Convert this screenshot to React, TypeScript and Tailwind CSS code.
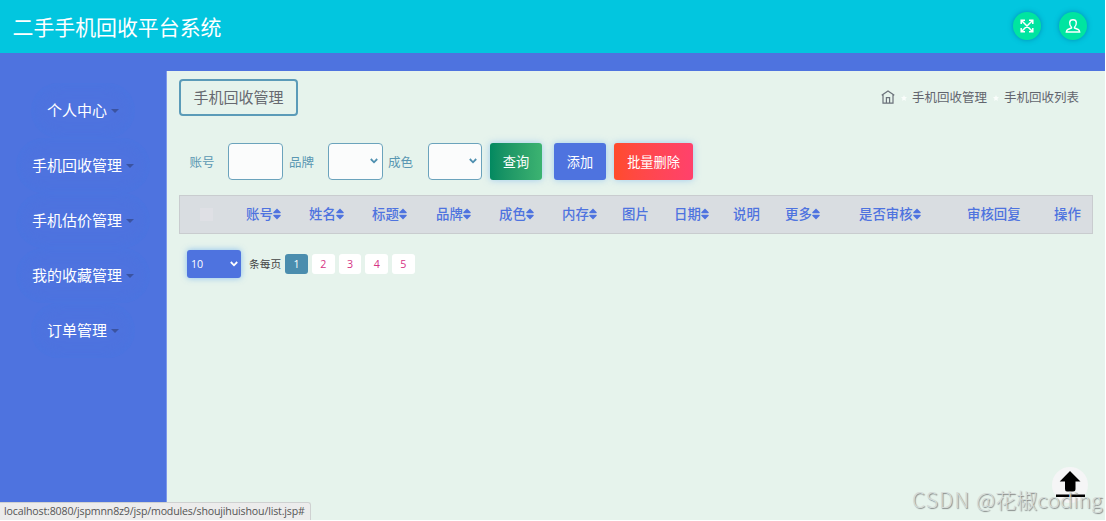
import React from "react";

const menu = ["个人中心", "手机回收管理", "手机估价管理", "我的收藏管理", "订单管理"];

const columns = [
  { label: "账号", sortable: true, width: "w-[63px]" },
  { label: "姓名", sortable: true, width: "w-[63px]" },
  { label: "标题", sortable: true, width: "w-[64px]" },
  { label: "品牌", sortable: true, width: "w-[63px]" },
  { label: "成色", sortable: true, width: "w-[63px]" },
  { label: "内存", sortable: true, width: "w-[60px]" },
  { label: "图片", sortable: false, width: "w-[52px]" },
  { label: "日期", sortable: true, width: "w-[59px]" },
  { label: "说明", sortable: false, width: "w-[52px]" },
  { label: "更多", sortable: true, width: "w-[74px]" },
  { label: "是否审核", sortable: true, width: "w-[108px]" },
  { label: "审核回复", sortable: false, width: "w-[87px]" },
  { label: "操作", sortable: false, width: "w-[38px]" },
];

function SortIcon() {
  return (
    <svg width="8" height="12" viewBox="0 0 8 12" className="mt-[2px] shrink-0 fill-[#4e73df]">
      <path d="M4 .4 7.7 4.2Q8 5.2 7.1 5.2H.9Q0 5.2.3 4.2ZM4 11.6.3 7.8Q0 6.8.9 6.8h6.2Q8 6.8 7.7 7.8Z" />
    </svg>
  );
}

function Chevron({ className }: { className: string }) {
  return (
    <svg width="8" height="6" viewBox="0 0 8 6" fill="none" strokeWidth="1.8" className={className}>
      <path d="M.8 1 4 4.3 7.2 1" />
    </svg>
  );
}

function Star() {
  return (
    <svg width="6" height="6" viewBox="0 0 12 12" className="mt-[2px] fill-[#fafdfb]">
      <path d="m6 0 1.8 4 4.2.5-3.1 2.9.8 4.4L6 9.7l-3.7 2.1.8-4.4L0 4.5 4.2 4Z" />
    </svg>
  );
}

function Header() {
  return (
    <header className="flex h-[53px] items-center bg-[#02c6df] pr-[18px] pl-[12.5px]">
      <h1 className="flex-1 text-[20.9px] leading-none text-white">二手手机回收平台系统</h1>
      <div className="flex gap-[18px]">
        <div className="mb-[2px] flex size-[28px] items-center justify-center rounded-full bg-[#00e5a0] shadow-[0_0_5px_rgba(0,90,140,0.5)]">
          <svg width="14" height="14" viewBox="0 0 14 14" fill="none" stroke="white" strokeWidth="1.5">
            <path d="m1.5 1.5 11 11M12.5 1.5l-11 11M1.2 5V1.2H5M9 1.2h3.8V5M12.8 9v3.8H9M5 12.8H1.2V9" />
          </svg>
        </div>
        <div className="mb-[2px] flex size-[28px] items-center justify-center rounded-full bg-[#00e5a0] shadow-[0_0_5px_rgba(0,90,140,0.5)]">
          <svg width="16" height="16" viewBox="0 0 16 16" fill="none" stroke="white" strokeWidth="1.4">
            <path d="M6.5 9.2C5.1 8 4.6 6.4 4.7 4.6 4.8 2.7 6.1 1.8 8 1.8s3.2.9 3.3 2.8c.1 1.8-.4 3.4-1.8 4.6v.8l3.7 1.5c1 .4 1.4 1.2 1.5 2.5H1.3c.1-1.3.5-2.1 1.5-2.5L6.5 10Z" />
          </svg>
        </div>
      </div>
    </header>
  );
}

function Sidebar() {
  return (
    <nav className="flex w-[167px] shrink-0 flex-col items-center border-r border-[#7d98ea] pt-[12px]">
      {menu.map((item) => (
        <div
          key={item}
          className="flex h-[55px] items-center justify-center rounded-[28px] px-[16px] text-[15px] text-white shadow-[inset_0_0_14px_rgba(70,119,226,0.6)]"
        >
          <span>{item}</span>
          <span className="ml-[4px] border-x-4 border-t-4 border-x-transparent border-t-[#3b53a0]" />
        </div>
      ))}
    </nav>
  );
}

function Filters() {
  const field = "h-[37px] rounded-[4px] border border-[#6ba3bc] bg-[#fbfcfc]";
  return (
    <div className="mt-[26px] flex h-[38px] items-center pl-[10.5px] text-[12.5px] text-[#5a97b2]">
      <span className="w-[38.5px] pt-[2px]">账号</span>
      <input className={`${field} w-[55px]`} />
      <span className="ml-[6px] w-[39px] pt-[2px]">品牌</span>
      <div className={`${field} flex w-[55px] items-center justify-end pr-[4px]`}>
        <Chevron className="stroke-[#4e8faf]" />
      </div>
      <span className="ml-[5px] w-[40px] pt-[2px]">成色</span>
      <div className={`${field} flex w-[54px] items-center justify-end pr-[4px]`}>
        <Chevron className="stroke-[#4e8faf]" />
      </div>
      <button className="ml-[8px] h-[37px] w-[52px] rounded-[3px] bg-linear-to-r from-[#028960] to-[#3cb371] pt-px text-[13.2px] text-white shadow-[0_0_7px_rgba(100,170,240,0.55)]">
        查询
      </button>
      <button className="ml-[12px] h-[37px] w-[52px] rounded-[3px] bg-[#4e73df] pt-px text-[13.2px] text-white shadow-[0_0_7px_rgba(100,170,240,0.55)]">
        添加
      </button>
      <button className="ml-[8px] h-[37px] w-[79px] rounded-[3px] bg-linear-to-r from-[#ff4b2b] to-[#ff416c] pt-px text-[13.2px] whitespace-nowrap text-white shadow-[0_0_7px_rgba(100,170,240,0.55)]">
        批量删除
      </button>
    </div>
  );
}

function Table() {
  return (
    <div className="mt-[15px] flex h-[39px] w-[914px] items-center border border-[#c9cccf] bg-[#d9dde1] text-[13.4px] font-medium text-[#4e73df]">
      <div className="w-[66px] shrink-0 pl-[20px]">
        <div className="size-[13px] bg-[#dfe0e5]" />
      </div>
      {columns.map((c) => (
        <div key={c.label} className={`flex shrink-0 items-center pb-[2px] whitespace-nowrap ${c.width}`}>
          {c.label}
          {c.sortable && <SortIcon />}
        </div>
      ))}
    </div>
  );
}

function Pager() {
  return (
    <div className="mt-[15px] flex h-[29px] items-center pl-[8px] text-[10.7px]">
      <div className="flex h-[28px] w-[54px] items-center justify-between rounded-[3px] bg-[#4e73df] pr-[3px] pl-[4px] font-['Open_Sans'] text-white shadow-[0_0_6px_rgba(100,170,240,0.7)]">
        <span className="pt-[2px]">10</span>
        <Chevron className="stroke-white" />
      </div>
      <span className="ml-[8px] w-[36px] pt-[2px] whitespace-nowrap text-[#444]">条每页</span>
      <div className="flex gap-[4px] font-['Open_Sans']">
        {[1, 2, 3, 4, 5].map((n) => (
          <span
            key={n}
            className={
              n === 1
                ? "flex h-[20px] w-[23px] items-center justify-center rounded-[3px] bg-[#4b8dae] pt-px text-white"
                : "flex h-[20px] w-[22.7px] items-center justify-center rounded-[3px] bg-white pt-px text-[#d63384]"
            }
          >
            {n}
          </span>
        ))}
      </div>
    </div>
  );
}

function Content() {
  return (
    <main className="flex-1 bg-[#e6f3ec] pt-[8px] pl-[12px]">
      <div className="flex justify-between pr-[26px]">
        <h2 className="flex h-[37px] w-[119px] items-center justify-center rounded-[4px] border-2 border-[#5b9bb8] text-[15px] text-[#666970]">
          手机回收管理
        </h2>
        <div className="flex h-[35px] items-center text-[12.5px] text-[#62656e]">
          <svg width="14" height="14" viewBox="0 0 14 14" fill="none" stroke="#6b717a" strokeWidth="1.2">
            <path d="M.7 5.2 7 .9l6.3 4.3M2 4.8v8.3h10V4.8M5.4 13V7.7h3.2V13" />
          </svg>
          <div className="flex w-[17px] justify-center pl-[1px]"><Star /></div>
          <span className="pt-px">手机回收管理</span>
          <div className="flex w-[17px] justify-center pl-[1px]"><Star /></div>
          <span className="pt-px">手机回收列表</span>
        </div>
      </div>
      <Filters />
      <Table />
      <Pager />
    </main>
  );
}

export default function App() {
  return (
    <div className="h-[521px] w-[1106px] overflow-hidden bg-white font-['Noto_Sans_CJK_SC',sans-serif]">
      <div className="relative flex h-[520px] w-[1105px] flex-col overflow-hidden bg-[#4e73df]">
        <Header />
        <div className="mt-[18px] flex flex-1">
          <Sidebar />
          <Content />
        </div>
        <div className="absolute bottom-0 left-0 flex h-[18px] w-[311px] items-center rounded-tr-[3px] border-t border-r border-[#cfd1d1] bg-[#ececec] pl-[4px] font-['Open_Sans'] text-[10.6px] tracking-[-0.15px] whitespace-nowrap text-[#555]">
          localhost:8080/jspmnn8z9/jsp/modules/shoujihuishou/list.jsp#
        </div>
        <div className="absolute top-[467px] left-[1052px] size-[36px] rounded-full bg-[#f5f5f6]">
          <svg width="36" height="36" viewBox="0 0 36 36" className="overflow-visible">
            <path d="M18 4 28.5 14.5H23.5V22Q23.5 24.5 21 24.5H15Q13 24.5 13 22V14.5H7.7ZM4 27.5h29v2.5H4Z" />
          </svg>
        </div>
        <div className="absolute top-[484px] left-[912px] text-[21px] leading-[30px] font-light whitespace-nowrap text-[#d5dbd8] [text-shadow:1px_1px_1px_#858988]">
          <span className="tracking-[1.1px]">CSDN </span>
          <span className="tracking-[0.1px]">@花椒coding</span>
        </div>
      </div>
    </div>
  );
}
